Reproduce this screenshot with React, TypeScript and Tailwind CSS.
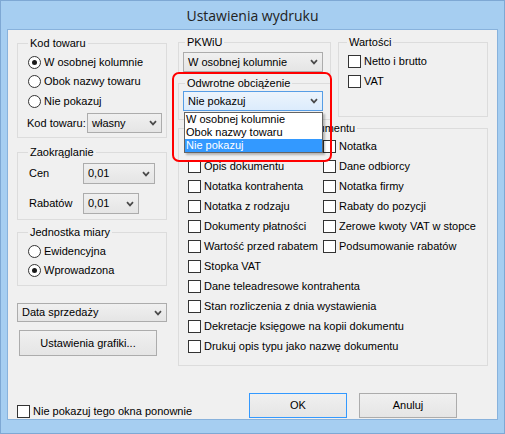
import React from "react";

function Chevron() {
  return (
    <svg width="8" height="6" viewBox="0 0 8 6" className="shrink-0">
      <path d="M1 1.2 L4 4.4 L7 1.2" fill="none" stroke="#4a4a4a" strokeWidth="1.7" />
    </svg>
  );
}

function Combo({ value, className = "", focused = false }: { value: string; className?: string; focused?: boolean }) {
  const skin = focused
    ? "border-[#569de5] bg-linear-to-b from-[#ecf4fc] to-[#dcecfc]"
    : "border-[#acacac] bg-linear-to-b from-[#f0f0f0] to-[#e5e5e5]";
  return (
    <div className={`flex items-center justify-between border pl-[4px] pr-[4px] ${skin} ${className}`}>
      <span className="leading-[13px] whitespace-nowrap">{value}</span>
      <Chevron />
    </div>
  );
}

function Check({ label, className = "" }: { label: string; className?: string }) {
  return (
    <div className={`flex items-center h-[20px] ${className}`}>
      <span className="w-[13px] h-[13px] border border-[#333333] bg-white shrink-0" />
      {label && <span className="ml-[3px] whitespace-nowrap leading-[13px]">{label}</span>}
    </div>
  );
}

function Radio({ label, checked = false, className = "" }: { label: string; checked?: boolean; className?: string }) {
  return (
    <div className={`flex items-center ${className}`}>
      <span className="w-[13px] h-[13px] rounded-full border border-[#333333] bg-white flex items-center justify-center shrink-0">
        {checked && <span className="w-[5px] h-[5px] rounded-full bg-[#1a1a1a]" />}
      </span>
      <span className="ml-[3px] whitespace-nowrap leading-[13px]">{label}</span>
    </div>
  );
}

function Button({ label, className = "" }: { label: string; className?: string }) {
  return (
    <div className={`flex items-center justify-center border bg-linear-to-b from-[#f0f0f0] to-[#e5e5e5] ${className}`}>
      <span className="leading-[13px]">{label}</span>
    </div>
  );
}

export default function App() {
  return (
    <div className="w-[505px] h-[434px] bg-[#a6cef1] border border-[#7ea8d4] flex flex-col font-['Liberation_Sans',Arial,sans-serif] text-[11px] text-black">
      <div className="h-[28px] flex items-center justify-center font-['Open_Sans',sans-serif] text-[14px] text-[#222222] pt-[1px]">
        Ustawienia wydruku
      </div>
      <div className="mx-[6px] h-[391px] border border-[#88b2dc] bg-[#f0f0f0]">
        <div className="relative h-full flex flex-col">
          <div className="flex pl-[9px] pr-[9px] pt-[5px] gap-[11px]">
            {/* left column */}
            <div className="w-[150px] mt-[1px] flex flex-col">
              <fieldset className="border border-[#dcdcdc] pl-[10px] pt-[2px] pb-[4px]">
                <legend className="px-[2px] leading-[14px]">Kod towaru</legend>
                <Radio label="W osobnej kolumnie" checked className="h-[20px]" />
                <Radio label="Obok nazwy towaru" className="h-[19px]" />
                <Radio label="Nie pokazuj" className="h-[20px]" />
                <div className="flex items-center mt-[2px] h-[20px]">
                  <span className="w-[60px] ml-[-1px] leading-[13px] whitespace-nowrap">Kod towaru:</span>
                  <Combo value="własny" className="w-[75px] h-[20px]" />
                </div>
              </fieldset>

              <fieldset className="mt-[7px] border border-[#dcdcdc] pl-[10px] pt-[4px] pb-[5px]">
                <legend className="px-[2px] leading-[14px]">Zaokrąglanie</legend>
                <div className="flex items-center h-[21px]">
                  <span className="w-[54px] ml-[1px] leading-[13px]">Cen</span>
                  <Combo value="0,01" className="w-[72px] h-[21px]" />
                </div>
                <div className="flex items-center h-[21px] mt-[9px]">
                  <span className="w-[54px] ml-[1px] leading-[13px]">Rabatów</span>
                  <Combo value="0,01" className="w-[56px] h-[21px]" />
                </div>
              </fieldset>

              <fieldset className="mt-[5px] border border-[#dcdcdc] pl-[10px] pt-[2px] pb-[5px]">
                <legend className="px-[2px] leading-[14px]">Jednostka miary</legend>
                <Radio label="Ewidencyjna" className="h-[20px]" />
                <Radio label="Wprowadzona" checked className="h-[19px]" />
              </fieldset>

              <Combo value="Data sprzedaży" className="mt-[17px] w-[150px] h-[19px]" />
              <Button label="Ustawienia grafiki..." className="mt-[8px] ml-[2px] w-[138px] h-[26px] border-[#acacac]" />
            </div>

            {/* right side */}
            <div className="w-[310px] flex flex-col">
              <div className="flex gap-[7px] items-start">
                <div className="w-[153px] flex flex-col">
                  <fieldset className="border border-[#dcdcdc] pl-[4px] pr-[7px] pt-[3px] pb-[1px]">
                    <legend className="ml-[2px] px-[2px] leading-[14px]">PKWiU</legend>
                    <Combo value="W osobnej kolumnie" className="h-[20px]" />
                  </fieldset>
                  <fieldset className="mt-[2px] border border-[#dcdcdc] pl-[4px] pr-[7px] pt-[1px] pb-[8px]">
                    <legend className="ml-[2px] px-[2px] leading-[14px]">Odwrotne obciążenie</legend>
                    <Combo value="Nie pokazuj" focused className="h-[20px]" />
                  </fieldset>
                </div>
                <fieldset className="w-[150px] h-[82px] border border-[#dcdcdc] pl-[9px] pt-[2px]">
                  <legend className="ml-[-1px] px-[2px] leading-[14px]">Wartości</legend>
                  <Check label="Netto i brutto" />
                  <Check label="VAT" />
                </fieldset>
              </div>

              <fieldset className="mt-[1px] border border-[#dcdcdc] pl-[9px] pt-[1px] pb-[9px]">
                <legend className="ml-[5px] px-[2px] leading-[14px]">Dodatkowe elementy dokumentu</legend>
                <div className="grid grid-cols-[135px_1fr]">
                  <Check label="" />
                  <Check label="Notatka" />
                  <Check label="Opis dokumentu" />
                  <Check label="Dane odbiorcy" />
                  <Check label="Notatka kontrahenta" />
                  <Check label="Notatka firmy" />
                  <Check label="Notatka z rodzaju" />
                  <Check label="Rabaty do pozycji" />
                  <Check label="Dokumenty płatności" />
                  <Check label="Zerowe kwoty VAT w stopce" />
                  <Check label="Wartość przed rabatem" />
                  <Check label="Podsumowanie rabatów" />
                </div>
                <Check label="Stopka VAT" />
                <Check label="Dane teleadresowe kontrahenta" />
                <Check label="Stan rozliczenia z dnia wystawienia" />
                <Check label="Dekretacje księgowe na kopii dokumentu" />
                <Check label="Drukuj opis typu jako nazwę dokumentu" />
              </fieldset>
            </div>
          </div>

          {/* bottom row */}
          <div className="mt-auto flex items-end pl-[9px] pr-[40px] pb-[1px]">
            <div className="flex items-center h-[13px]">
              <span className="w-[13px] h-[13px] border border-[#333333] bg-white shrink-0" />
              <span className="ml-[3px] whitespace-nowrap leading-[13px]">Nie pokazuj tego okna ponownie</span>
            </div>
            <div className="ml-auto flex gap-[12px]">
              <Button label="OK" className="w-[98px] h-[25px] border-[#3399ff]" />
              <Button label="Anuluj" className="w-[98px] h-[25px] border-[#acacac]" />
            </div>
          </div>

          {/* open dropdown list */}
          <div className="absolute left-[176px] top-[82px] w-[139px] border border-[#646464] bg-white shadow-[2px_2px_2px_rgba(0,0,0,0.25)]">
            <div className="h-[13px] pl-[1px] leading-[13px] whitespace-nowrap">W osobnej kolumnie</div>
            <div className="h-[13px] pl-[1px] leading-[13px] whitespace-nowrap">Obok nazwy towaru</div>
            <div className="h-[13px] pl-[1px] leading-[13px] whitespace-nowrap bg-[#3399ff] text-white">Nie pokazuj</div>
          </div>

          {/* red annotation */}
          <div className="absolute left-[164px] top-[42px] w-[160px] h-[90px] border-2 border-[#ff0000] rounded-[7px]" />
        </div>
      </div>
    </div>
  );
}
